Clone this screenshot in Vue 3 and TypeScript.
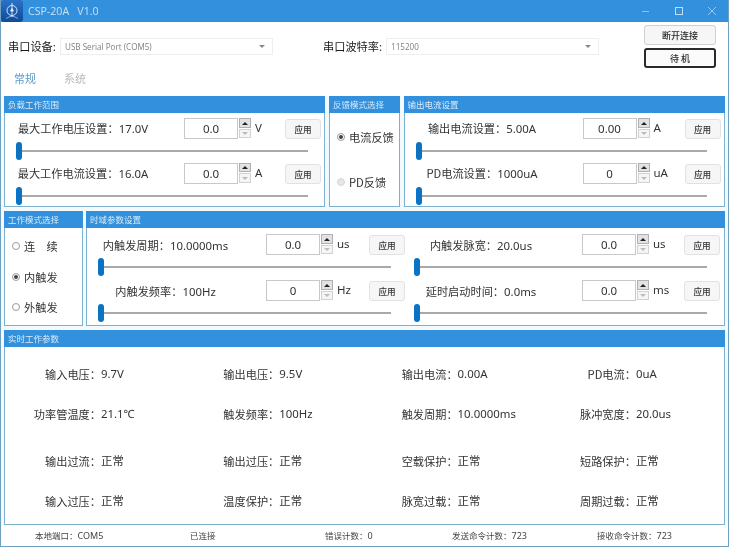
<script setup lang="ts">
interface Ctrl { label: string; reading: string; value: string; unit: string }
const load: Ctrl[] = [
  { label: '最大工作电压设置：', reading: '17.0V', value: '0.0', unit: 'V' },
  { label: '最大工作电流设置：', reading: '16.0A', value: '0.0', unit: 'A' },
]
const output: Ctrl[] = [
  { label: '输出电流设置：', reading: '5.00A', value: '0.00', unit: 'A' },
  { label: 'PD电流设置：', reading: '1000uA', value: '0', unit: 'uA' },
]
const timeLeft: Ctrl[] = [
  { label: '内触发周期：', reading: '10.0000ms', value: '0.0', unit: 'us' },
  { label: '内触发频率：', reading: '100Hz', value: '0', unit: 'Hz' },
]
const timeRight: Ctrl[] = [
  { label: '内触发脉宽：', reading: '20.0us', value: '0.0', unit: 'us' },
  { label: '延时启动时间：', reading: '0.0ms', value: '0.0', unit: 'ms' },
]
const live: [string, string][] = [
  ['输入电压：', '9.7V'], ['输出电压：', '9.5V'], ['输出电流：', '0.00A'], ['PD电流：', '0uA'],
  ['功率管温度：', '21.1℃'], ['触发频率：', '100Hz'], ['触发周期：', '10.0000ms'], ['脉冲宽度：', '20.0us'],
  ['输出过流：', '正常'], ['输出过压：', '正常'], ['空载保护：', '正常'], ['短路保护：', '正常'],
  ['输入过压：', '正常'], ['温度保护：', '正常'], ['脉宽过载：', '正常'], ['周期过载：', '正常'],
]
const modes = [
  { label: '连　续', on: false },
  { label: '内触发', on: true },
  { label: '外触发', on: false },
]
const sets = { load, output, timeLeft, timeRight }
</script>

<template>
  <div class="win">
    <header class="title">
      <svg class="logo" width="22" height="22" viewBox="0 0 22 22">
        <defs>
          <linearGradient id="lg" x1="0" y1="0" x2="0" y2="1">
            <stop offset="0" stop-color="#2a72c8" />
            <stop offset="1" stop-color="#0d4a9a" />
          </linearGradient>
        </defs>
        <rect x="0" y="0" width="22" height="22" rx="3" fill="url(#lg)" />
        <circle cx="11" cy="10.5" r="5" fill="none" stroke="#d8e8f4" stroke-width="1" />
        <path d="M11 3V17M11 8.5L9.6 11H12.4Z" stroke="#e6f0f8" stroke-width="0.9" fill="#e6f0f8" />
        <path d="M5 18.5L9 16.5H13L17 18.5" stroke="#9cc0e4" stroke-width="0.8" fill="none" />
      </svg>
      <span class="title-text">CSP-20A&nbsp;&nbsp; V1.0</span>
      <div class="wbtns">
        <svg width="10" height="10" viewBox="0 0 10 10"><path d="M1 5.5H8" stroke="#8fc2ea" /></svg>
        <svg width="10" height="10" viewBox="0 0 10 10"><rect x="1.5" y="1.5" width="7" height="7" fill="none" stroke="#c2def3" /></svg>
        <svg width="10" height="10" viewBox="0 0 10 10"><path d="M1 1L9 9M9 1L1 9" stroke="#b4d6f0" stroke-width="0.8" /></svg>
      </div>
    </header>

    <section class="top">
      <div class="top-left">
        <div class="ports">
          <label class="plabel">串口设备:</label>
          <div class="select">USB Serial Port (COM5)<i class="caret"></i></div>
          <label class="plabel baud">串口波特率:</label>
          <div class="select">115200<i class="caret"></i></div>
        </div>
        <nav class="tabs">
          <span class="tab on">常规</span>
          <span class="tab">系统</span>
        </nav>
      </div>
      <div class="top-btns">
        <button class="tbtn">断开连接</button>
        <button class="tbtn strong">待 机</button>
      </div>
    </section>

    <main class="panels">
      <div class="row r1">
        <section class="panel p-load">
          <h3 class="phead">负载工作范围</h3>
          <div class="stack s44">
            <div v-for="c in sets.load" :key="c.label" class="ctrl c-load">
              <div class="line">
                <div class="cap"><span>{{ c.label }}</span><span class="rd">{{ c.reading }}</span></div>
                <input class="num" :value="c.value" readonly />
                <div class="spin"><b class="up"></b><b class="down"></b></div>
                <span class="unit">{{ c.unit }}</span>
                <button class="apply">应用</button>
              </div>
              <div class="slider"><i></i></div>
            </div>
          </div>
        </section>
        <section class="panel p-fb">
          <h3 class="phead">反馈模式选择</h3>
          <div class="fb-body">
            <div class="radio"><i class="dot on"></i>电流反馈</div>
            <div class="radio"><i class="dot off"></i>PD反馈</div>
          </div>
        </section>
        <section class="panel p-out">
          <h3 class="phead">输出电流设置</h3>
          <div class="stack s44">
            <div v-for="c in sets.output" :key="c.label" class="ctrl c-out">
              <div class="line">
                <div class="cap"><span>{{ c.label }}</span><span class="rd">{{ c.reading }}</span></div>
                <input class="num" :value="c.value" readonly />
                <div class="spin"><b class="up"></b><b class="down"></b></div>
                <span class="unit">{{ c.unit }}</span>
                <button class="apply">应用</button>
              </div>
              <div class="slider"><i></i></div>
            </div>
          </div>
        </section>
      </div>

      <div class="row r2">
        <section class="panel p-mode">
          <h3 class="phead">工作模式选择</h3>
          <div class="mode-body">
            <div v-for="m in modes" :key="m.label" class="radio">
              <i class="dot" :class="{ on: m.on }"></i>{{ m.label }}
            </div>
          </div>
        </section>
        <section class="panel p-time">
          <h3 class="phead">时域参数设置</h3>
          <div class="time-body">
            <div class="stack s46">
              <div v-for="c in sets.timeLeft" :key="c.label" class="ctrl c-tl">
                <div class="line">
                  <div class="cap"><span>{{ c.label }}</span><span class="rd">{{ c.reading }}</span></div>
                  <input class="num" :value="c.value" readonly />
                  <div class="spin"><b class="up"></b><b class="down"></b></div>
                  <span class="unit">{{ c.unit }}</span>
                  <button class="apply">应用</button>
                </div>
                <div class="slider"><i></i></div>
              </div>
            </div>
            <div class="stack s46">
              <div v-for="c in sets.timeRight" :key="c.label" class="ctrl c-tr">
                <div class="line">
                  <div class="cap"><span>{{ c.label }}</span><span class="rd">{{ c.reading }}</span></div>
                  <input class="num" :value="c.value" readonly />
                  <div class="spin"><b class="up"></b><b class="down"></b></div>
                  <span class="unit">{{ c.unit }}</span>
                  <button class="apply">应用</button>
                </div>
                <div class="slider"><i></i></div>
              </div>
            </div>
          </div>
        </section>
      </div>

      <section class="panel p-live">
        <h3 class="phead">实时工作参数</h3>
        <div class="live">
          <div v-for="([k, v], i) in live" :key="i" class="cell">
            <span class="k">{{ k }}</span><span class="rd">{{ v }}</span>
          </div>
        </div>
      </section>
    </main>

    <footer class="status">
      <span>本地端口：<b class="sv">COM5</b></span>
      <span>已连接</span>
      <span>错误计数：<b class="sv">0</b></span>
      <span>发送命令计数：<b class="sv">723</b></span>
      <span>接收命令计数：<b class="sv">723</b></span>
    </footer>
  </div>
</template>

<style scoped>
.win {
  width: 729px;
  height: 547px;
  box-sizing: border-box;
  border: 1px solid #6f9fbf;
  border-top: 0;
  background: #fff;
  overflow: hidden;
  font-family: "Noto Sans CJK SC", "Noto Sans", sans-serif;
  font-size: 11.2px;
  color: #2e2e2e;
  display: flex;
  flex-direction: column;
  filter: blur(0.3px);
}
.title {
  height: 22px;
  margin: 0 -1px;
  background: #3390dc;
  display: flex;
  align-items: center;
  flex: none;
}
.logo { flex: none; margin-left: 1px; }
.title-text {
  margin-left: 5px;
  color: #c8e1f4;
  font-family: "Open Sans", sans-serif;
  font-size: 10.6px;
}
.wbtns {
  margin-left: auto;
  margin-right: 12px;
  display: flex;
  gap: 23px;
}
.top {
  height: 74px;
  flex: none;
  display: flex;
}
.top-left { flex: 1; }
.ports {
  display: flex;
  align-items: center;
  padding: 16px 0 0 7px;
}
.plabel { width: 52px; color: #1c1c1c; white-space: nowrap; line-height: 15px; }
.baud { width: 63px; margin-left: 50px; }
.select {
  width: 213px;
  height: 17px;
  box-sizing: border-box;
  border: 1px solid #eeeeee;
  position: relative;
  font-family: "Open Sans", sans-serif;
  font-size: 8.1px;
  line-height: 16px;
  padding-left: 4px;
  color: #808080;
}
.caret {
  position: absolute;
  right: 7px;
  top: 6px;
  border: 3px solid transparent;
  border-top: 3px solid #888;
  border-bottom: 0;
}
.tabs {
  display: flex;
  gap: 28px;
  padding: 15px 0 0 13px;
}
.tab { color: #bbbbbb; font-size: 11px; line-height: 16px; }
.tab.on { color: #5c9bc9; }
.top-btns {
  width: 84px;
  flex: none;
  display: flex;
  flex-direction: column;
  gap: 3px;
  padding-top: 3px;
}
.tbtn {
  width: 72px;
  height: 20px;
  box-sizing: border-box;
  border: 1px solid #d0d0d0;
  border-radius: 3px;
  background: #f6f6f6;
  padding: 1px 0 0;
  font-family: inherit;
  font-size: 9px;
  font-weight: 500;
  color: #2a2a2a;
}
.strong {
  border: 2px solid #2a2a2a;
  background: #fbfbfb;
}
.panels {
  flex: 1;
  padding: 0 3px;
  display: flex;
  flex-direction: column;
  gap: 4px;
  background: #f2fafe;
}
.row { display: flex; }
.r1 { height: 111px; gap: 4px; }
.r2 { height: 115px; gap: 3px; }
.panel {
  border: 1px solid #7eb0cf;
  background: #fff;
  box-sizing: border-box;
  display: flex;
  flex-direction: column;
}
.phead {
  margin: -1px -1px 0;
  height: 17px;
  flex: none;
  background: #3390dc;
  color: #d9ebf8;
  font-size: 8.5px;
  font-weight: 400;
  line-height: 17px;
  padding-left: 4px;
}
.p-load { width: 321px; }
.p-out { width: 321.5px; }
.p-fb { width: 70.5px; }
.p-mode { width: 79px; }
.p-time { width: 639px; }
.p-live { height: 195px; }
.stack { display: flex; flex-direction: column; padding-top: 5px; }
.s44 .ctrl { height: 44.5px; }
.s46 { padding-top: 6px; }
.s46 .ctrl { height: 46px; }
.time-body { display: flex; }
.time-body .stack:first-child { width: 322px; }
.line { display: flex; align-items: flex-start; }
.cap {
  height: 21px;
  line-height: 20px;
  text-align: center;
  white-space: nowrap;
  flex: none;
}
.s46 .cap { line-height: 22px; }
.rd {
  font-family: "Noto Sans", "Noto Sans CJK SC", sans-serif;
  font-size: 11.4px;
}
.cap, .unit { color: #333; }
.num {
  width: 54px;
  height: 21px;
  box-sizing: border-box;
  border: 1px solid #c8c8c8;
  text-align: center;
  font-family: "Noto Sans", sans-serif;
  font-size: 11.5px;
  color: #333;
  outline: none;
  padding: 0;
  flex: none;
}
.spin {
  width: 12px;
  height: 20px;
  margin-left: 1px;
  display: flex;
  flex-direction: column;
  gap: 1px;
  flex: none;
}
.spin b {
  display: block;
  flex: 1;
  box-sizing: border-box;
  position: relative;
}
.up { background: #e2e2e2; border: 1px solid #b0b0b0; }
.down { background: #f5f5f5; border: 1px solid #d2d2d2; }
.spin b::after {
  content: "";
  position: absolute;
  left: 2px;
  top: 2.5px;
  border: 3px solid transparent;
  border-top: 0;
  border-bottom: 3px solid #222;
}
.spin .down::after {
  border-bottom: 0;
  border-top: 3px solid #bcbcbc;
}
.unit {
  margin-left: 4px;
  width: 30px;
  line-height: 20px;
  font-family: "Noto Sans", sans-serif;
  font-size: 11.5px;
  flex: none;
}
.apply {
  width: 36px;
  height: 20px;
  box-sizing: border-box;
  border: 1px solid #e2e2e2;
  border-radius: 3px;
  background: #f6f6f6;
  padding: 0;
  font-family: inherit;
  font-size: 8.6px;
  font-weight: 500;
  color: #333;
  flex: none;
  margin-top: 1px;
}
.slider {
  position: relative;
  height: 2px;
  background: #a9a9a9;
  margin-top: 11px;
}
.slider i {
  position: absolute;
  left: 0;
  top: -8px;
  width: 6px;
  height: 18px;
  border-radius: 3px;
  background: #0b73c4;
}
.c-load .cap { width: 156px; }
.c-load .num { margin-left: 23px; }
.c-load .slider { margin-left: 11px; width: 292px; }
.c-out .cap { width: 155px; }
.c-out .num { margin-left: 23px; }
.c-out .unit { width: 31px; }
.c-out .slider { margin-left: 11px; width: 291px; }
.c-tl .cap { width: 157px; }
.c-tl .num { margin-left: 22px; }
.c-tl .unit { width: 32px; }
.c-tl .slider { margin-left: 11px; width: 293px; height: 1.5px; }
.c-tr .cap { width: 144px; }
.c-tr .num { margin-left: 29px; }
.c-tr .unit { width: 31px; }
.c-tr .slider { margin-left: 5px; width: 293px; height: 1.5px; }
.radio {
  display: flex;
  align-items: center;
  white-space: nowrap;
  color: #333;
}
.dot {
  width: 8px;
  height: 8px;
  box-sizing: border-box;
  border: 1px solid #9a9a9a;
  border-radius: 50%;
  background: #fff;
  margin-right: 4px;
  flex: none;
  position: relative;
}
.dot.on::after {
  content: "";
  position: absolute;
  inset: 1px;
  border-radius: 50%;
  background: #444;
}
.dot.off { background: #e6e6e6; border-color: #d8d8d8; }
.fb-body {
  display: flex;
  flex-direction: column;
  gap: 28.5px;
  padding: 16px 0 0 7px;
}
.fb-body .radio { height: 16px; }
.mode-body {
  display: flex;
  flex-direction: column;
  gap: 14.5px;
  padding: 10px 0 0 7px;
}
.mode-body .radio { height: 16px; }
.live {
  display: grid;
  grid-template-columns: repeat(4, 178.3px);
  grid-template-rows: 40px 47px 40px 20px;
  padding-top: 17px;
  align-items: start;
}
.cell { display: flex; line-height: 20px; white-space: nowrap; color: #333; }
.k { width: 96px; text-align: right; flex: none; }
.status {
  height: 21px;
  flex: none;
  box-sizing: border-box;
  padding: 0 0 1px 34px;
  background: #fff;
  display: grid;
  grid-template-columns: 155px 135px 127px 145px 1fr;
  align-items: center;
  font-size: 8.5px;
  color: #444;
  white-space: nowrap;
}
.sv {
  font-family: "Noto Sans", sans-serif;
  font-weight: 400;
  font-size: 9px;
}
</style>
